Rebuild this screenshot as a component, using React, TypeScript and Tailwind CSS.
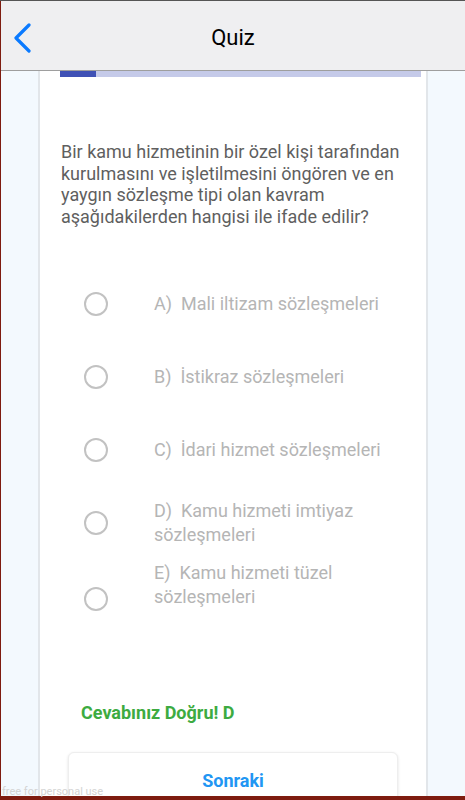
import { useState } from 'react';

const options = [
    { key: 'A', text: 'Mali iltizam sözleşmeleri', row: 'h-[73px]', shift: '' },
    { key: 'B', text: 'İstikraz sözleşmeleri', row: 'h-[73px]', shift: '' },
    { key: 'C', text: 'İdari hizmet sözleşmeleri', row: 'h-[73px]', shift: '' },
    { key: 'D', text: 'Kamu hizmeti imtiyaz sözleşmeleri', row: 'h-[73px]', shift: '' },
    { key: 'E', text: 'Kamu hizmeti tüzel sözleşmeleri', row: 'h-[79px]', shift: 'mb-[28px]' },
];

const App = () => {
    const [selected, setSelected] = useState<string | null>(null);

    return (
        <div className="relative flex h-[800px] w-full flex-col overflow-hidden border-t border-[#555555] bg-[#7e1c10] pb-[4px] pl-px font-['Roboto',sans-serif]">
            {/* Header */}
            <div className="grid h-[70px] shrink-0 grid-cols-[1fr_auto_1fr] items-center border-b border-[#9e9e9e] bg-[#efeff1] pt-[4px]">
                <button className="flex h-full items-center pl-[12px]">
                    <svg width="20" height="30" viewBox="0 0 20 30" fill="none">
                        <path d="M16 2 L3 15 L16 28" stroke="#0a7aff" strokeWidth="3.2" strokeLinecap="round" strokeLinejoin="round" />
                    </svg>
                </button>
                <h1 className="text-[22px] text-black">Quiz</h1>
                <div />
            </div>

            {/* Body */}
            <div className="min-h-0 flex-1 overflow-hidden bg-[#f3f9fe] pl-[37px]">
                <div className="h-full w-[390px] border-x-2 border-[#e2e6ea] bg-white">
                    <div className="ml-[20px] mr-[5px] flex h-[6px] bg-[#c5cae9]">
                        <div className="h-full w-[36px] bg-[#3f51b5]" />
                    </div>

                    <p className="mt-[64px] pl-[21px] pr-[12px] text-[18px] leading-[21.5px] text-[#5f5f5f]">
                        Bir kamu hizmetinin bir özel kişi tarafından kurulmasını ve işletilmesini öngören ve en yaygın sözleşme tipi olan kavram aşağıdakilerden hangisi ile ifade edilir?
                    </p>

                    <div className="mt-[40px] flex flex-col">
                        {options.map((o) => (
                            <div key={o.key} className={`flex items-center ${o.row}`} onClick={() => setSelected(o.key)}>
                                <div className="ml-[44px] flex h-[24px] w-[24px] shrink-0 items-center justify-center rounded-full border-[2.5px] border-[#c2c2c2]">
                                    {selected === o.key && <div className="h-[12px] w-[12px] rounded-full bg-[#c2c2c2]" />}
                                </div>
                                <p className={`ml-[46px] pr-[30px] text-[18px] leading-[24px] text-[#b5b5b5] ${o.shift}`}>
                                    {`${o.key})\u00a0 ${o.text}`}
                                </p>
                            </div>
                        ))}
                    </div>

                    <p className="mt-[64px] pl-[41px] text-[18px] font-bold leading-[22px] text-[#3dab41]">Cevabınız Doğru! D</p>

                    <div className="ml-[28px] mt-[28px] flex h-[60px] w-[330px] justify-center rounded-md border border-[#eeeeee] bg-white pt-[14px] shadow-[0_1px_3px_rgba(0,0,0,0.12)]">
                        <span className="text-[18px] font-bold text-[#2196f3]">Sonraki</span>
                    </div>
                </div>
            </div>

            <span className="pointer-events-none absolute bottom-[3px] left-[2px] text-[11px] leading-none text-[#d4d4d4]">free for personal use</span>
        </div>
    );
};

export default App;
